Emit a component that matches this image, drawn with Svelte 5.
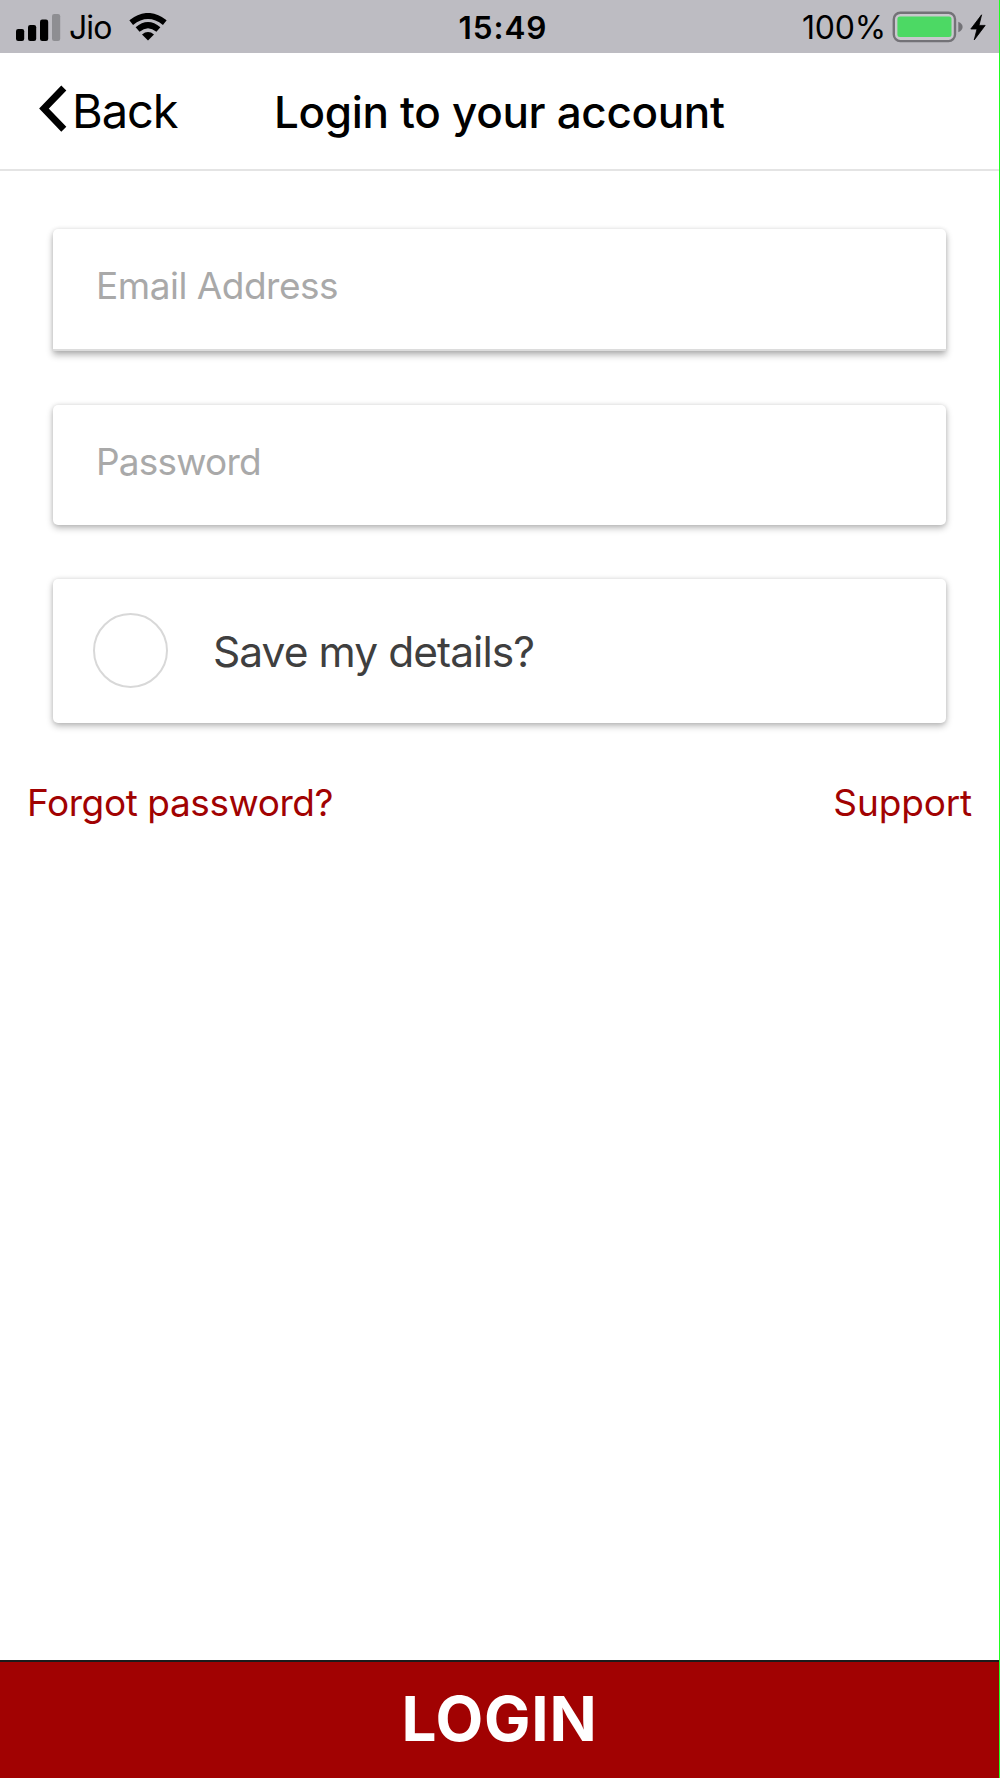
<script>
  let email = '';
  let password = '';
  let saveDetails = false;

  const bars = [
    { x: 0, height: 12 },
    { x: 12, height: 16 },
    { x: 24, height: 21.5 },
    { x: 36, height: 27, faded: true }
  ];
</script>

<div class="screen">
  <div class="status-bar">
    <div class="status-left">
      <svg class="signal" width="45" height="27" viewBox="0 0 45 27">
        {#each bars as bar}
          <rect x={bar.x} y={27 - bar.height} width="8.2" height={bar.height} rx="2.2" class:faded={bar.faded} />
        {/each}
      </svg>
      <span class="carrier">Jio</span>
      <svg class="wifi" width="38" height="28" viewBox="0 0 38 28">
        <path class="arc" d="M2.2 9.6 Q19 -3.6 35.8 9.6" />
        <path class="arc" d="M8.6 16.6 Q19 7.6 29.4 16.6" />
        <path d="M13 21.4 Q19 16.6 25 21.4 L19 27.4 Z" />
      </svg>
    </div>
    <span class="time">15:49</span>
    <div class="status-right">
      <span class="percent">100%</span>
      <svg class="battery" width="72" height="32" viewBox="0 0 72 32">
        <rect class="shell" x="1.8" y="1.7" width="61.2" height="28.4" rx="6.5" />
        <rect class="charge" x="5.4" y="5.5" width="54.1" height="20.5" rx="2.5" />
        <path class="cap" d="M66.3 10.8 Q70.6 12.6 70.6 16 Q70.6 19.4 66.3 21.2 Z" />
      </svg>
      <svg class="bolt" width="16" height="27" viewBox="0 0 16 27">
        <path d="M11.6 0.8 L0.8 15 H7 L4.2 26 L15.2 11.4 H9 Z" />
      </svg>
    </div>
  </div>

  <header class="nav">
    <button class="back" type="button">
      <svg width="28" height="48" viewBox="0 0 28 48">
        <path d="M24.8 3 L5 23.6 L24.8 44.2" />
      </svg>
      <span>Back</span>
    </button>
    <h1>Login to your account</h1>
  </header>

  <form on:submit|preventDefault>
    <label class="card field focused">
      <input class="email" type="email" placeholder="Email Address" bind:value={email} />
    </label>
    <label class="card field">
      <input class="password" type="password" placeholder="Password" bind:value={password} />
    </label>
    <label class="card save">
      <input type="checkbox" bind:checked={saveDetails} />
      <span>Save my details?</span>
    </label>
  </form>

  <div class="links">
    <button class="forgot" type="button">Forgot password?</button>
    <button class="support" type="button">Support</button>
  </div>

  <button class="login" type="button"><span>LOGIN</span></button>
</div>

<style>
  :global(body) {
    margin: 0;
  }

  .screen {
    box-sizing: border-box;
    display: flex;
    flex-direction: column;
    width: 1000px;
    height: 1778px;
    overflow: hidden;
    border-right: 1px solid #1fff1f;
    background: #fff;
    color: #000;
    font-family: Inter, "Liberation Sans", sans-serif;
  }

  button {
    margin: 0;
    padding: 0;
    border: none;
    background: none;
    color: inherit;
    font: inherit;
    cursor: pointer;
  }

  svg {
    display: block;
    flex: none;
  }

  .status-bar {
    display: grid;
    grid-template-columns: 1fr auto 1fr;
    align-items: center;
    box-sizing: border-box;
    height: 53px;
    flex: none;
    padding: 1px 13px 0 16px;
    background: #bdbcc2;
    font-size: 32px;
    line-height: 50px;
  }

  .status-bar span {
    padding-top: 2px;
  }

  .status-left,
  .status-right {
    display: flex;
    align-items: center;
  }

  .status-right {
    justify-content: flex-end;
  }

  .signal .faded {
    fill: #8e8e92;
  }

  .carrier {
    margin-left: 8px;
    width: 43px;
    letter-spacing: -0.9px;
  }

  .wifi {
    margin-left: 17px;
  }

  .wifi .arc {
    fill: none;
    stroke: #000;
    stroke-width: 6;
  }

  .status-bar .time {
    padding-left: 4px;
    font-weight: 600;
    font-size: 31.5px;
    letter-spacing: 0.9px;
  }

  .percent {
    letter-spacing: -0.2px;
  }

  .battery {
    margin-left: 6px;
  }

  .battery .shell {
    fill: #c9c8cd;
    stroke: #737277;
    stroke-width: 2.4;
  }

  .battery .charge {
    fill: #4cd964;
  }

  .battery .cap {
    fill: #737277;
  }

  .bolt {
    margin-left: 6px;
  }

  .bolt path {
    stroke: #000;
    stroke-width: 0.8;
  }

  .nav {
    display: flex;
    align-items: center;
    box-sizing: border-box;
    height: 118px;
    flex: none;
    padding: 0 0 0 39px;
    border-bottom: 2px solid #e4e4e4;
    background: #fff;
  }

  .back {
    display: flex;
    align-items: center;
    width: 235px;
    font-size: 47px;
    letter-spacing: -1.1px;
  }

  .back svg {
    margin-bottom: 5px;
  }

  .back svg path {
    fill: none;
    stroke: #000;
    stroke-width: 7;
  }

  .back span {
    margin: 0 0 2px 5px;
  }

  h1 {
    margin: 2px 0 0;
    font-size: 44px;
    font-weight: 500;
    letter-spacing: -0.32px;
    white-space: nowrap;
  }

  form {
    display: flex;
    flex-direction: column;
    padding: 58px 53px 0;
  }

  .card {
    display: flex;
    box-sizing: border-box;
    border-radius: 5px;
    background: #fff;
    box-shadow: 0 3px 7px rgba(0, 0, 0, 0.28), 0 0 4px rgba(0, 0, 0, 0.1);
  }

  .field {
    height: 120px;
    margin-bottom: 54px;
    padding: 0 44px 7px 43px;
  }

  .field.focused {
    height: 122px;
    border-bottom: 2px solid #dcdcdc;
    border-radius: 5px 5px 0 0;
    box-shadow: 0 4px 7px rgba(0, 0, 0, 0.3), 0 0 4px rgba(0, 0, 0, 0.1);
  }

  .field input {
    width: 100%;
    padding: 0;
    border: none;
    outline: none;
    background: none;
    font: inherit;
    font-size: 37px;
  }

  .field .email {
    letter-spacing: -0.5px;
  }

  .field .password {
    letter-spacing: -0.8px;
  }

  .field input::placeholder {
    color: #a9a9a9;
    opacity: 1;
  }

  .save {
    align-items: center;
    height: 144px;
    padding-left: 40px;
    color: #3f3f3f;
    font-size: 42.5px;
    letter-spacing: -0.95px;
  }

  .save input {
    box-sizing: border-box;
    width: 75px;
    height: 75px;
    margin: 0 45px 2px 0;
    border: 2px solid #d8d8d8;
    border-radius: 50%;
    appearance: none;
  }

  .save input:checked {
    background: #a10202;
  }

  .links {
    display: flex;
    justify-content: space-between;
    padding: 57px 27px 0;
    color: #a10202;
    font-size: 37px;
  }

  .forgot {
    letter-spacing: -0.42px;
  }

  .support {
    letter-spacing: -0.15px;
  }

  .login {
    box-sizing: border-box;
    height: 118px;
    margin-top: auto;
    padding-bottom: 4px;
    border-top: 2px solid #1c1c1c;
    background: #a10202;
    color: #fff;
    font-size: 62px;
    font-weight: 700;
    letter-spacing: 0.7px;
  }
</style>
